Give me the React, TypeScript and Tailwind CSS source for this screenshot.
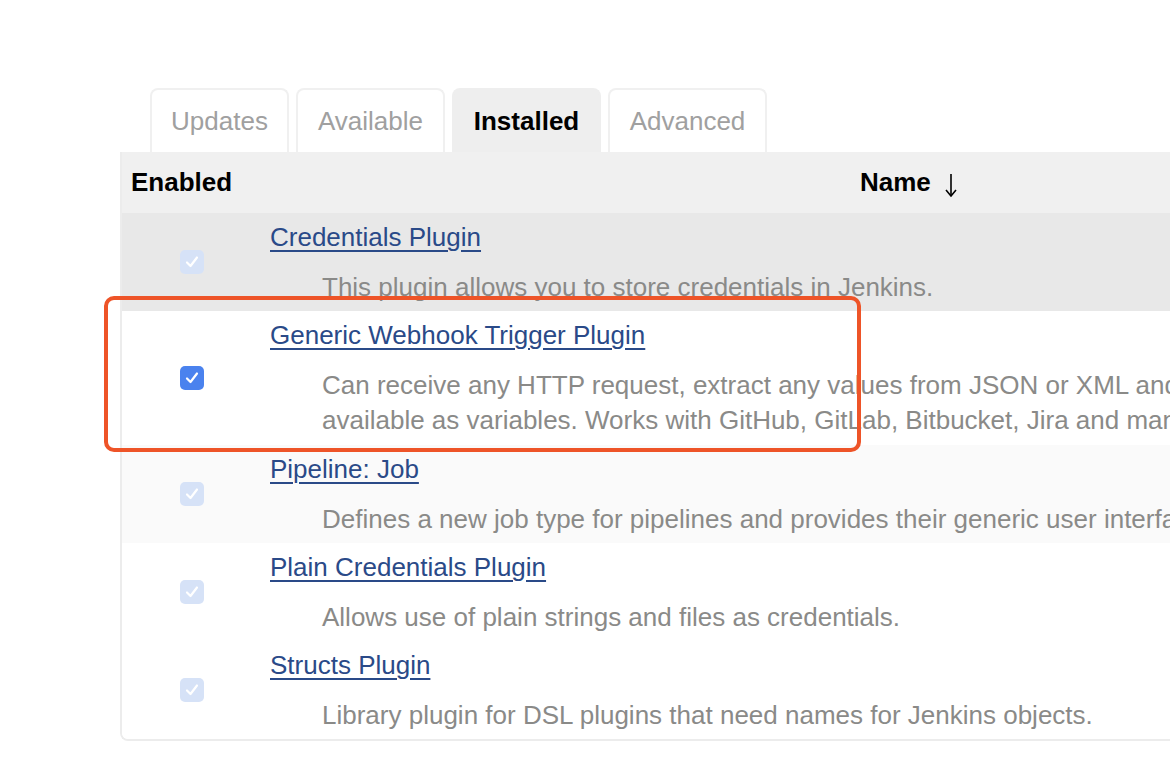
import React from "react";

type Row = { name: string; desc: string[]; bg: string; enabled: boolean; pb: string };

const rows: Row[] = [
  { name: "Credentials Plugin", desc: ["This plugin allows you to store credentials in Jenkins."], bg: "bg-[#e8e8e8]", enabled: false, pb: "pb-[6px]" },
  {
    name: "Generic Webhook Trigger Plugin",
    desc: [
      "Can receive any HTTP request, extract any values from JSON or XML and trigger a job with those values",
      "available as variables. Works with GitHub, GitLab, Bitbucket, Jira and many more.",
    ],
    bg: "bg-white",
    enabled: true,
    pb: "pb-[7px]",
  },
  { name: "Pipeline: Job", desc: ["Defines a new job type for pipelines and provides their generic user interface."], bg: "bg-[#fafafa]", enabled: false, pb: "pb-[6px]" },
  { name: "Plain Credentials Plugin", desc: ["Allows use of plain strings and files as credentials."], bg: "bg-white", enabled: false, pb: "pb-[6px]" },
  { name: "Structs Plugin", desc: ["Library plugin for DSL plugins that need names for Jenkins objects."], bg: "bg-white", enabled: false, pb: "pb-[6px]" },
];

function Check({ on }: { on: boolean }) {
  return (
    <div
      className={
        "w-[24px] h-[24px] shrink-0 rounded-[5px] flex items-center justify-center " +
        (on ? "bg-[#4a82ee]" : "bg-[#d6e2f7]")
      }
    >
      <svg width="18" height="18" viewBox="0 0 18 18">
        <polyline points="4,9.5 7.5,13 14,4.5" fill="none" stroke="white" strokeWidth="2.2" strokeLinecap="round" strokeLinejoin="round" />
      </svg>
    </div>
  );
}

const tabs = [
  { label: "Updates", w: "w-[139px]", active: false },
  { label: "Available", w: "w-[149px]", active: false },
  { label: "Installed", w: "w-[149px]", active: true },
  { label: "Advanced", w: "w-[159px]", active: false },
];

export default function App() {
  return (
    <div
      className="relative w-[1170px] h-[760px] bg-white overflow-hidden"
      style={{ fontFamily: '"Liberation Sans", Arial, Helvetica, sans-serif' }}
    >
      <div className="pt-[88px]">
        <div className="flex gap-[7px] pl-[150px]">
          {tabs.map((t) => (
            <div
              key={t.label}
              className={
                t.w +
                " h-[64px] rounded-t-[8px] border-2 border-b-0 flex items-center justify-center text-[26px] " +
                (t.active
                  ? "bg-[#eeeeee] border-[#eeeeee] text-black font-bold"
                  : "bg-white border-[#f0f0f0] text-[#a0a0a0]")
              }
            >
              {t.label}
            </div>
          ))}
        </div>
        <div className="ml-[120px] w-[1100px] border-l-2 border-b-2 border-[#ececec] rounded-bl-[8px] overflow-hidden">
          <div className="h-[61px] bg-[#f0f0f0] flex items-center text-[26px] text-black">
            <div className="pl-[9px] w-[738px] shrink-0 font-bold">Enabled</div>
            <div className="flex items-center">
              <span className="font-bold">Name</span>
              <svg className="ml-[14px] mt-[4px]" width="12" height="26" viewBox="0 0 12 26">
                <line x1="6" y1="2" x2="6" y2="24" stroke="black" strokeWidth="1.6" />
                <polyline points="1,18 6,24 11,18" fill="none" stroke="black" strokeWidth="1.6" />
              </svg>
            </div>
          </div>
          {rows.map((r) => (
            <div key={r.name} className={"flex items-center " + r.bg}>
              <div className="w-[148px] shrink-0 flex justify-center pr-[8px]">
                <Check on={r.enabled} />
              </div>
              <div className={"pt-[9px] whitespace-nowrap " + r.pb}>
                <div className="text-[26px] leading-[30px] text-[#2a4a88] underline underline-offset-[4px] decoration-[2px]">
                  {r.name}
                </div>
                <div className="mt-[18px] pl-[52px] text-[26px] leading-[35px] text-[#8a8a88]">
                  {r.desc.map((d) => (
                    <div key={d}>{d}</div>
                  ))}
                </div>
              </div>
            </div>
          ))}
        </div>
      </div>
      <div className="absolute left-[104px] top-[296px] w-[757px] h-[156px] border-[4px] border-[#ee5428] rounded-[10px]" />
    </div>
  );
}
